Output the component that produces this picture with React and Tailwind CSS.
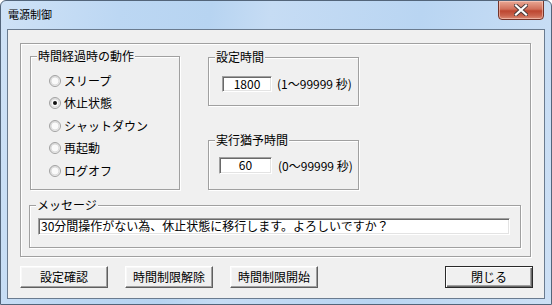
// 電源制御 dialog, Windows 7 style
const FONT = "font-['Noto_Sans_CJK_JP','Liberation_Sans',sans-serif]"

function Group({ label, className = '', children }) {
  return (
    <div className={`relative border border-[#a0a0a0] shadow-[inset_1px_1px_0_#fff,1px_1px_0_#fff] ${className}`}>
      {label && (
        <span className="absolute left-[6px] top-[-8px] bg-[#f0f0f0] px-px text-[12px] leading-[14px]">{label}</span>
      )}
      {children}
    </div>
  )
}

function Radio({ checked, label }) {
  return (
    <div className="flex h-[22.5px] items-center">
      <svg width="12" height="12" viewBox="0 0 12 12" className="shrink-0">
        <defs>
          <linearGradient id="rg" x1="0" y1="0" x2="1" y2="1">
            <stop offset="0" stopColor="#cfcfcf" />
            <stop offset="1" stopColor="#ffffff" />
          </linearGradient>
        </defs>
        <circle cx="6" cy="6" r="5.5" fill="url(#rg)" stroke="#a2a2a2" />
        <circle cx="6" cy="6" r="4" fill="#fafafa" stroke="#d4d4d4" strokeWidth="0.8" />
        {checked && <circle cx="6" cy="6" r="2" fill="#111" />}
      </svg>
      <span className="ml-[3px] text-[12px] leading-[14px]">{label}</span>
    </div>
  )
}

function TextBox({ className = '', children }) {
  return (
    <div
      className={`border border-t-[#a0a0a0] border-l-[#a0a0a0] border-b-white border-r-white bg-white text-[12px] leading-[14px] shadow-[inset_1px_1px_0_#696969,inset_-1px_-1px_0_#e3e3e3] ${className}`}
    >
      {children}
    </div>
  )
}

function Button({ children, isDefault, className = '' }) {
  return (
    <button
      className={`flex h-[22px] w-[88px] items-center justify-center bg-[#f0f0f0] text-[12px] leading-[14px] ${
        isDefault
          ? 'border border-[#2a2a2a] shadow-[inset_1px_1px_0_#fff,inset_-1px_-1px_0_#6a6a6a,inset_-2px_-2px_0_#a0a0a0]'
          : 'border border-t-[#fff] border-l-[#fff] border-r-[#5f5f5f] border-b-[#5f5f5f] shadow-[inset_-1px_-1px_0_#a0a0a0,inset_1px_1px_0_#f8f8f8]'
      } ${className}`}
    >
      {children}
    </button>
  )
}

export default function App() {
  return (
    <div
      className={`${FONT} flex h-[305px] w-[552px] flex-col overflow-hidden rounded-t-[6px] border border-[#53657a] bg-[linear-gradient(100deg,#cfe2f6_0%,#bcd7f3_20%,#b7d4f1_35%,#c6dcf4_45%,#b9d5f2_70%,#cde0f5_100%)] text-black`}
    >
      {/* title bar */}
      <div className="flex h-[28px] items-start">
        <span className="pl-[7px] pt-[6px] text-[11px] leading-[14px] text-black">電源制御</span>
        <div className="ml-auto mr-[7px] mt-[-1px] flex h-[20px] w-[46px] items-center justify-center rounded-b-[4px] border border-[#73342a] bg-[linear-gradient(#e9a895,#d0705b_45%,#bd4630_55%,#c9624c_80%,#dc8a73)] shadow-[inset_0_0_0_1px_rgba(255,220,210,0.5)]">
          <svg width="14" height="12" viewBox="0 0 14 12">
            <path d="M2 1.5 L12 10.5 M12 1.5 L2 10.5" stroke="#4a3a3a" strokeWidth="4" strokeLinecap="square" />
            <path d="M2 1.5 L12 10.5 M12 1.5 L2 10.5" stroke="#ffffff" strokeWidth="2.2" strokeLinecap="square" />
          </svg>
        </div>
      </div>

      {/* client area */}
      <div className="mx-[6px] h-[270px] border border-[#6a7b8f] bg-[#f0f0f0]">
        <div className="ml-[12px] mt-[13px] flex h-[214px] w-[511px] flex-col border border-[#a0a0a0] shadow-[inset_1px_1px_0_#fff,1px_1px_0_#fff]">
          <div className="ml-[9px] mt-[12px] flex">
            <Group label="時間経過時の動作" className="h-[134px] w-[150px]">
              <div className="pl-[18px] pt-[12.5px]">
                <Radio label="スリープ" />
                <Radio label="休止状態" checked />
                <Radio label="シャットダウン" />
                <Radio label="再起動" />
                <Radio label="ログオフ" />
              </div>
            </Group>

            <div className="ml-[28px] flex flex-col">
              <Group label="設定時間" className="mt-px h-[49px] w-[151px]">
                <div className="ml-[13px] mt-[18px] flex items-center">
                  <TextBox className="h-[16px] w-[50px] text-center">1800</TextBox>
                  <span className="ml-[5px] text-[12px] leading-[14px]">(1～99999 秒)</span>
                </div>
              </Group>
              <Group label="実行猶予時間" className="mt-[34px] h-[50px] w-[151px]">
                <div className="ml-[10px] mt-[16px] flex items-center">
                  <TextBox className="h-[17px] w-[53px] text-center">60</TextBox>
                  <span className="ml-[6px] text-[12px] leading-[14px]">(0～99999 秒)</span>
                </div>
              </Group>
            </div>
          </div>

          <Group label="メッセージ" className="ml-[8px] mt-[15px] h-[43px] w-[492px]">
            <TextBox className="ml-[8px] mt-[12px] h-[17px] w-[472px] pl-[2px]">
              30分間操作がない為、休止状態に移行します。よろしいですか？
            </TextBox>
          </Group>
        </div>

        <div className="ml-[12px] mt-[9px] flex">
          <Button>設定確認</Button>
          <Button className="ml-[17px]">時間制限解除</Button>
          <Button className="ml-[17px]">時間制限開始</Button>
          <Button className="ml-[127px]" isDefault>閉じる</Button>
        </div>
      </div>
    </div>
  )
}
